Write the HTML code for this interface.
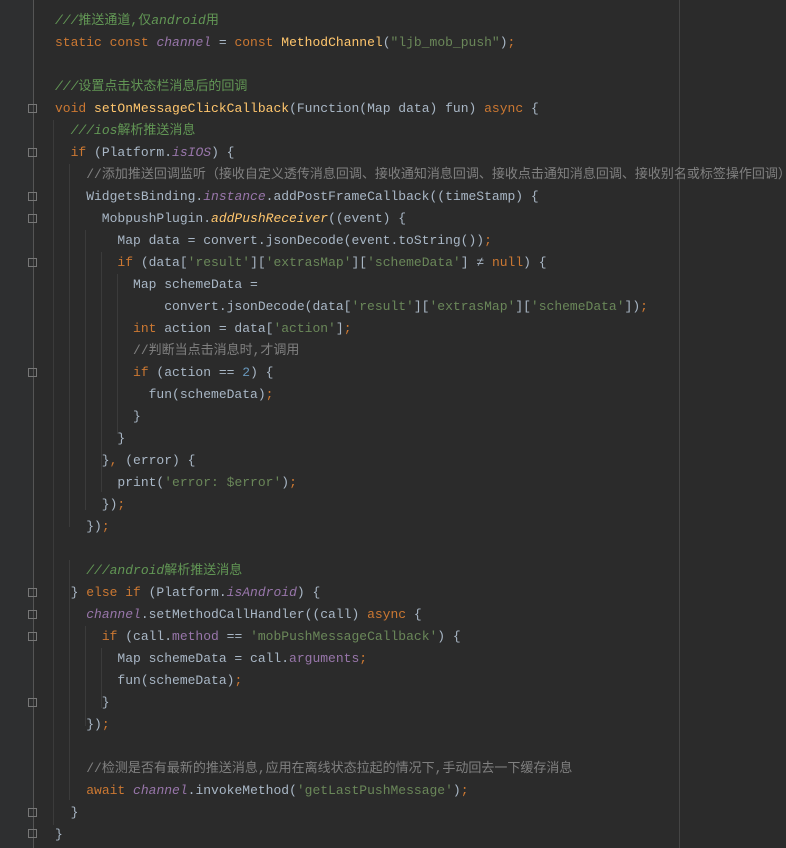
<!DOCTYPE html>
<html><head><meta charset="utf-8"><style>
html,body{margin:0;padding:0;background:#2b2b2b;width:786px;height:848px;overflow:hidden}
#g{position:absolute;left:0;top:0;width:33px;height:848px;background:#2e2f30}
#gl{position:absolute;left:33px;top:0;width:1px;height:848px;background:#555}
#rl{position:absolute;left:679px;top:0;width:1px;height:848px;background:#444}
pre{position:absolute;left:55px;top:10px;margin:0;font-family:"Liberation Mono","Noto Sans CJK SC",monospace;font-size:13px;line-height:22px;color:#a9b7c6;white-space:pre}
.k{color:#cc7832}.d{color:#629755;font-style:italic}.dc{color:#629755}.c{color:#808080}.s{color:#6a8759}.f{color:#ffc66d}.p{color:#9876aa;font-style:italic}.pp{color:#9876aa}.n{color:#6897bb}
.gd{position:absolute;width:1px;background:#3b3b3b}
.fo{position:absolute;left:28px;width:9px;height:9px;border:1px solid #777;box-sizing:border-box}
</style></head><body>
<div id="g"></div><div id="gl"></div><div id="rl"></div>
<div class="gd" style="left:53px;top:120px;height:705px"></div>
<div class="gd" style="left:69px;top:164px;height:363px"></div>
<div class="gd" style="left:85px;top:230px;height:280px"></div>
<div class="gd" style="left:101px;top:252px;height:240px"></div>
<div class="gd" style="left:117px;top:274px;height:160px"></div>
<div class="gd" style="left:69px;top:560px;height:240px"></div>
<div class="gd" style="left:85px;top:626px;height:100px"></div>
<div class="gd" style="left:101px;top:648px;height:60px"></div>
<div class="fo" style="top:104px"></div><div class="fo" style="top:148px"></div>
<div class="fo" style="top:192px"></div><div class="fo" style="top:214px"></div>
<div class="fo" style="top:258px"></div><div class="fo" style="top:368px"></div>
<div class="fo" style="top:588px"></div><div class="fo" style="top:610px"></div>
<div class="fo" style="top:632px"></div><div class="fo" style="top:698px"></div>
<div class="fo" style="top:808px"></div><div class="fo" style="top:829px"></div>
<pre><span class="d">///</span><span class="dc">推送通道,仅</span><span class="d">android</span><span class="dc">用</span>
<span class="k">static const</span> <span class="p">channel</span> = <span class="k">const</span> <span class="f">MethodChannel</span>(<span class="s">"ljb_mob_push"</span>)<span class="k">;</span>

<span class="d">///</span><span class="dc">设置点击状态栏消息后的回调</span>
<span class="k">void</span> <span class="f">setOnMessageClickCallback</span>(Function(Map data) fun) <span class="k">async</span> {
  <span class="d">///ios</span><span class="dc">解析推送消息</span>
  <span class="k">if</span> (Platform.<span class="p">isIOS</span>) {
    <span class="c">//添加推送回调监听（接收自定义透传消息回调、接收通知消息回调、接收点击通知消息回调、接收别名或标签操作回调）</span>
    WidgetsBinding.<span class="p">instance</span>.addPostFrameCallback((timeStamp) {
      MobpushPlugin.<span class="p" style="color:#ffc66d">addPushReceiver</span>((event) {
        Map data = convert.jsonDecode(event.toString())<span class="k">;</span>
        <span class="k">if</span> (data[<span class="s">'result'</span>][<span class="s">'extrasMap'</span>][<span class="s">'schemeData'</span>] ≠ <span class="k">null</span>) {
          Map schemeData =
              convert.jsonDecode(data[<span class="s">'result'</span>][<span class="s">'extrasMap'</span>][<span class="s">'schemeData'</span>])<span class="k">;</span>
          <span class="k">int</span> action = data[<span class="s">'action'</span>]<span class="k">;</span>
          <span class="c">//判断当点击消息时,才调用</span>
          <span class="k">if</span> (action == <span class="n">2</span>) {
            fun(schemeData)<span class="k">;</span>
          }
        }
      }<span class="k">,</span> (error) {
        print(<span class="s">'error: </span><span class="s">$error'</span>)<span class="k">;</span>
      })<span class="k">;</span>
    })<span class="k">;</span>

    <span class="d">///android</span><span class="dc">解析推送消息</span>
  } <span class="k">else if</span> (Platform.<span class="p">isAndroid</span>) {
    <span class="p">channel</span>.setMethodCallHandler((call) <span class="k">async</span> {
      <span class="k">if</span> (call.<span class="pp">method</span> == <span class="s">'mobPushMessageCallback'</span>) {
        Map schemeData = call.<span class="pp">arguments</span><span class="k">;</span>
        fun(schemeData)<span class="k">;</span>
      }
    })<span class="k">;</span>

    <span class="c">//检测是否有最新的推送消息,应用在离线状态拉起的情况下,手动回去一下缓存消息</span>
    <span class="k">await</span> <span class="p">channel</span>.invokeMethod(<span class="s">'getLastPushMessage'</span>)<span class="k">;</span>
  }
}</pre>
</body></html>
